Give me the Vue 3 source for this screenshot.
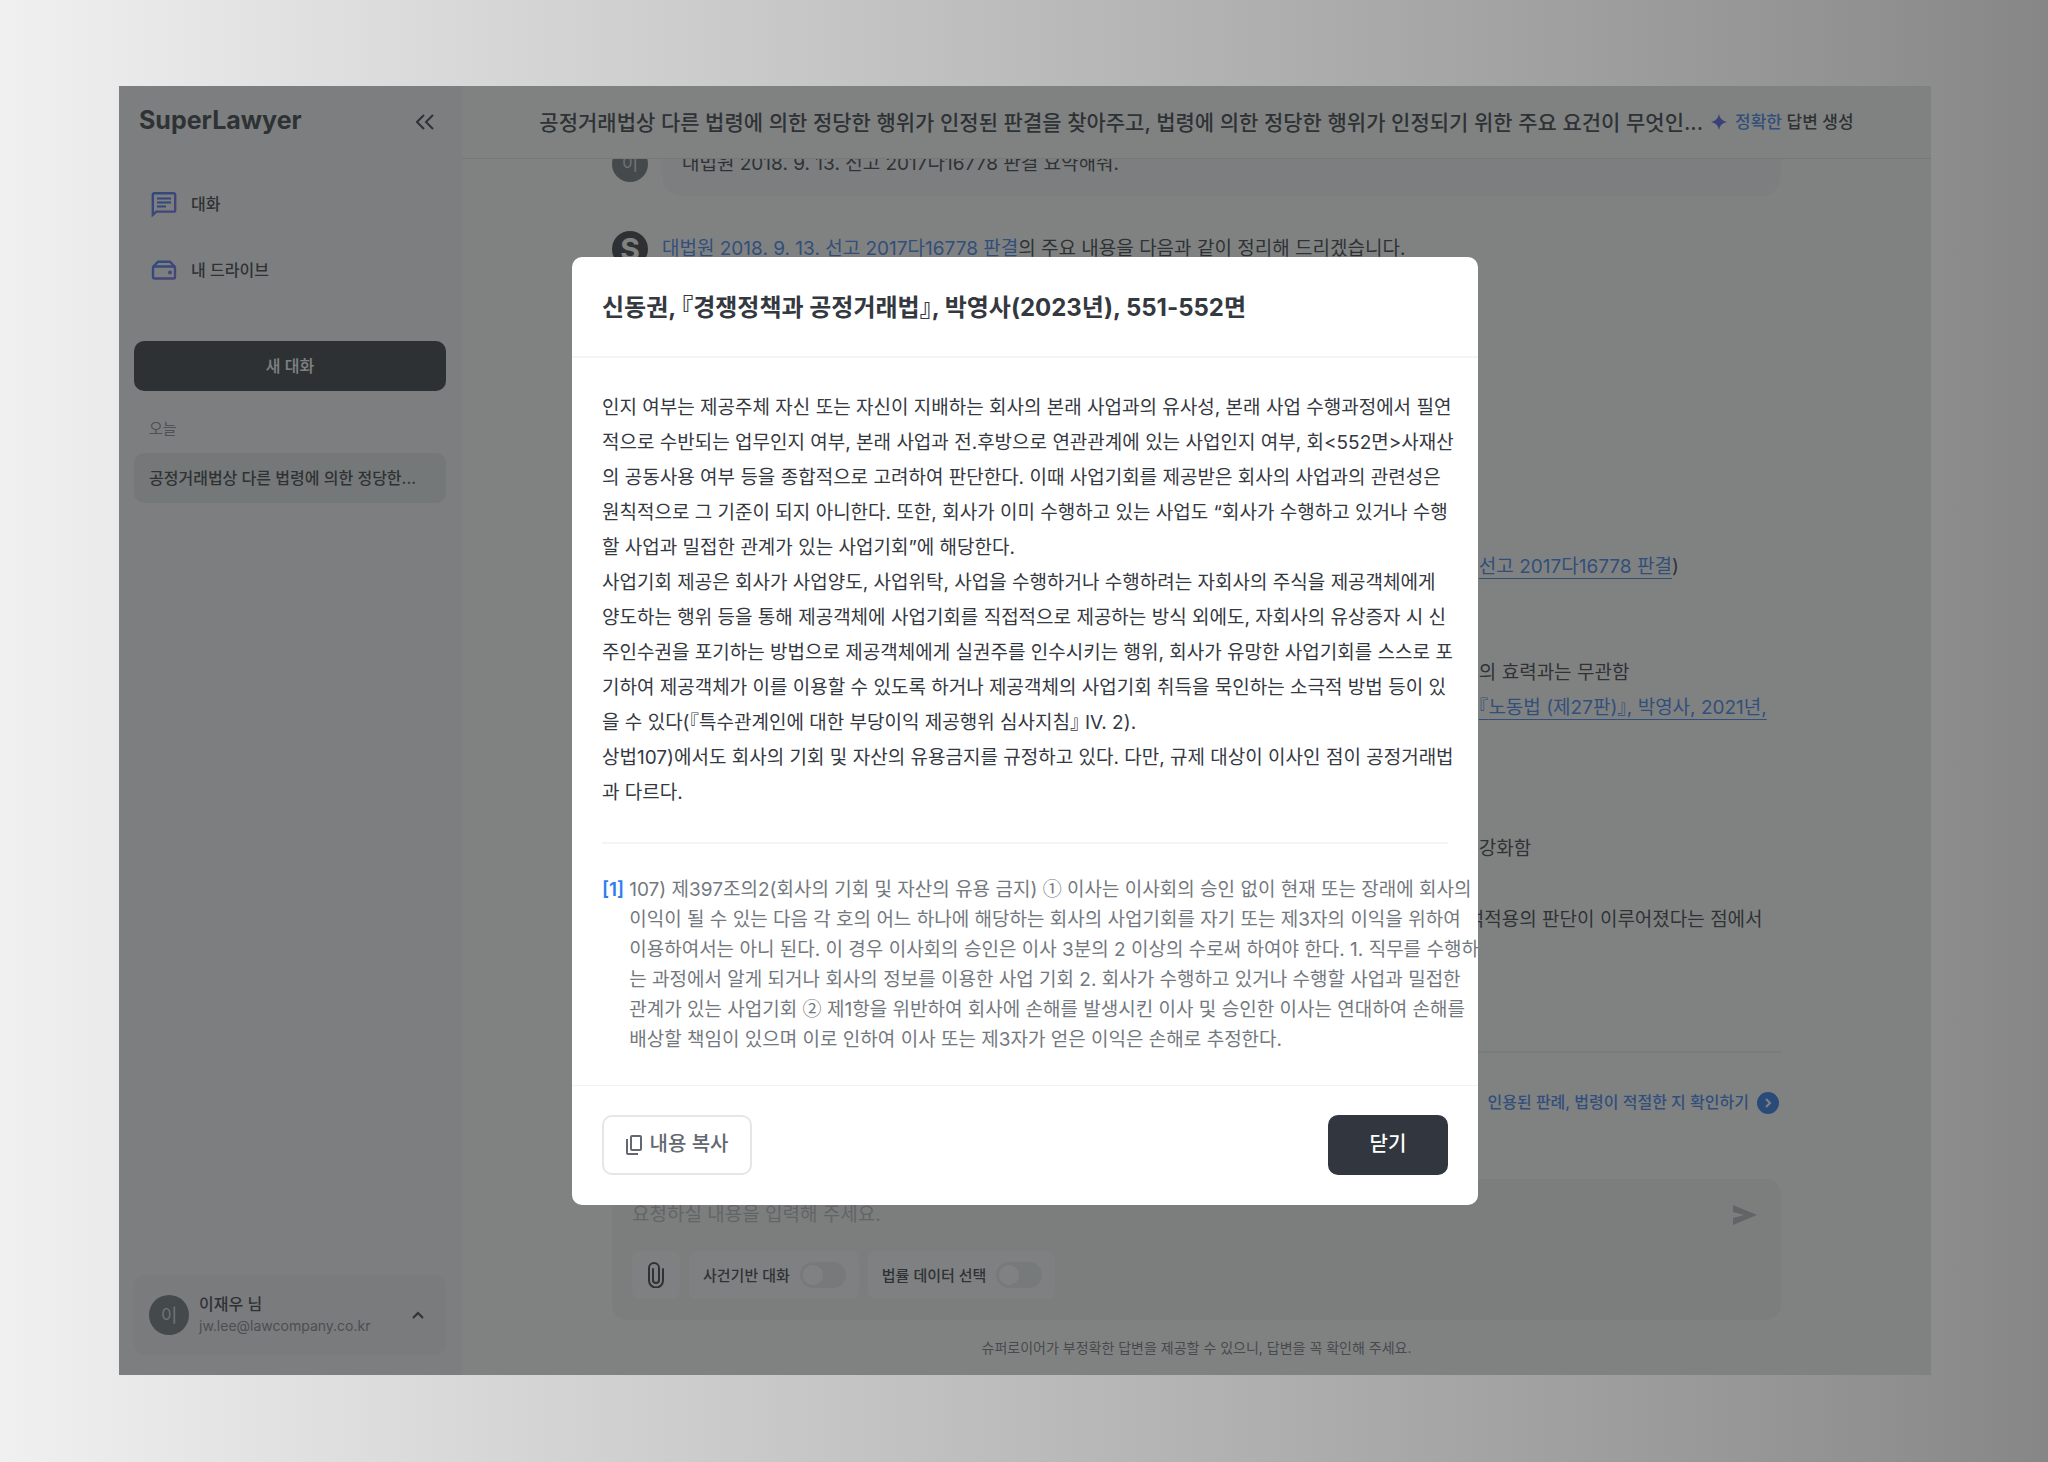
<template>
  <div class="page">
    <div class="window">
      <aside class="sidebar">
        <div class="brand-row">
          <h1 class="brand">SuperLawyer</h1>
          <button class="icon-button" type="button" aria-label="사이드바 접기">
            <svg width="18" height="16" viewBox="0 0 18 16" fill="none" stroke="currentColor" stroke-width="2">
              <path d="M8 1L1 8l7 7M17 1l-7 7 7 7" />
            </svg>
          </button>
        </div>

        <nav class="nav">
          <a class="nav-link" href="#chat">
            <svg width="26" height="26" viewBox="0 0 26 26" fill="none">
              <defs>
                <linearGradient id="navGradient" x1="0" y1="0" x2="1" y2="1">
                  <stop offset="0" stop-color="#3474f8" />
                  <stop offset="1" stop-color="#7a62e4" />
                </linearGradient>
              </defs>
              <path
                d="M3.2 2.2h19.6a1.4 1.4 0 0 1 1.4 1.4v15.6a1.4 1.4 0 0 1-1.4 1.4H5.4L1.8 23.8V3.6a1.4 1.4 0 0 1 1.4-1.4z"
                stroke="url(#navGradient)"
                stroke-width="2.4"
              />
              <path d="M6 7.5h14M6 11.500h14M6 15.5h9" stroke="#4069ee" stroke-width="2.2" />
            </svg>
            <span>대화</span>
          </a>
          <a class="nav-link" href="#drive">
            <svg width="26" height="26" viewBox="0 0 26 26" fill="none">
              <path
                d="M2 10l4.5-4.800a1.500 1.500 0 0 1 1-.4h11a1.500 1.500 0 0 1 1 .4L24 10"
                stroke="url(#navGradient)"
                stroke-width="2.4"
              />
              <rect x="2" y="9.500" width="22" height="12" rx="1.500" stroke="url(#navGradient)" stroke-width="2.4" />
              <circle cx="19" cy="15.500" r="2" fill="#6a6de4" />
            </svg>
            <span>내 드라이브</span>
          </a>
        </nav>

        <button class="new-chat" type="button">새 대화</button>
        <p class="group-label">오늘</p>
        <a class="history-item" href="#history">공정거래법상 다른 법령에 의한 정당한...</a>

        <button class="user-card" type="button">
          <span class="avatar avatar-large">이</span>
          <span class="user-text">
            <strong>이재우 님</strong>
            <small>jw.lee@lawcompany.co.kr</small>
          </span>
          <svg width="12" height="8" viewBox="0 0 12 8" fill="none" stroke="currentColor" stroke-width="2">
            <path d="M1 7l5-5 5 5" />
          </svg>
        </button>
      </aside>

      <main class="main">
        <header class="topbar">
          <h2>{{ chatTitle }}</h2>
          <svg width="16" height="16" viewBox="0 0 16 16" fill="#4f5de8">
            <path d="M8 0q1.200 6.800 8 8-6.800 1.200-8 8-1.200-6.800-8-8 6.800-1.200 8-8z" />
          </svg>
          <p class="mode"><em>정확한</em> 답변 생성</p>
        </header>

        <section class="thread">
          <article class="message question">
            <span class="avatar">이</span>
            <p class="bubble">대법원 2018. 9. 13. 선고 2017다16778 판결 요약해줘.</p>
          </article>

          <article class="message">
            <span class="avatar avatar-bot">S</span>
            <div class="answer">
              <p>
                <a class="plain-link" href="#case">대법원 2018. 9. 13. 선고 2017다16778 판결</a>의 주요 내용을 다음과 같이 정리해 드리겠습니다.
              </p>
              <div class="answer-tail">
                <p><a href="#case">선고 2017다16778 판결</a>)</p>
                <p class="gap-two">의 효력과는 무관함</p>
                <p><a href="#book"><span class="half">『</span>노동법 (제27판)<span class="half">』</span>, 박영사, 2021년,</a></p>
                <p class="gap-three">강화함</p>
                <p class="gap-one hanging">석적용의 판단이 이루어졌다는 점에서</p>
              </div>
            </div>
          </article>

          <a class="verify" href="#verify">
            <span>인용된 판례, 법령이 적절한 지 확인하기</span>
            <svg width="22" height="22" viewBox="0 0 22 22" fill="none">
              <circle cx="11" cy="11" r="11" fill="#2a74e6" />
              <path d="M9 7l4 4-4 4" stroke="#fff" stroke-width="2" />
            </svg>
          </a>
        </section>

        <form class="composer" @submit.prevent>
          <div class="composer-top">
            <input v-model="draft" type="text" aria-label="요청 내용" placeholder="요청하실 내용을 입력해 주세요." />
            <button class="icon-button send" type="submit" aria-label="보내기">
              <svg width="24" height="20" viewBox="0 0 24 20" fill="currentColor">
                <path d="M0 0l24 10L0 20v-7l11-3L0 7z" />
              </svg>
            </button>
          </div>
          <div class="composer-tools">
            <button class="attach" type="button" aria-label="파일 첨부">
              <svg width="16" height="26" viewBox="0 0 16 26" fill="none" stroke="currentColor" stroke-width="2" stroke-linecap="round">
                <path d="M15 7v11.500a7 7 0 0 1-14 0V6a5 5 0 0 1 10 0v12a3 3 0 0 1-6 0V7" />
              </svg>
            </button>
            <label v-for="option in options" :key="option.id" class="switch">
              <span>{{ option.label }}</span>
              <input v-model="option.on" type="checkbox" />
            </label>
          </div>
        </form>
        <p class="disclaimer">슈퍼로이어가 부정확한 답변을 제공할 수 있으니, 답변을 꼭 확인해 주세요.</p>
      </main>

      <div class="backdrop">
        <div class="modal" role="dialog" aria-modal="true" aria-labelledby="modal-title">
          <header class="modal-header">
            <h2 id="modal-title">
              신동권, <span class="half">『</span>경쟁정책과 공정거래법<span class="half">』</span>, 박영사(2023년), 551-552면
            </h2>
          </header>
          <div class="modal-body">
            <p class="excerpt">{{ excerptTop }}<span class="half">『</span>특수관계인에 대한 부당이익 제공행위 심사지침<span class="half">』</span>{{ excerptBottom }}</p>
            <hr />
            <div class="footnote">
              <a href="#note-1">[1]</a>
              <p>
                <template v-for="(part, index) in footnote" :key="index">
                  <span v-if="part.length === 1" class="circled">{{ part }}</span>
                  <template v-else>{{ part }}</template>
                </template>
              </p>
            </div>
          </div>
          <footer class="modal-footer">
            <button class="copy" type="button">
              <svg width="16" height="20" viewBox="0 0 16 20" fill="none" stroke="currentColor" stroke-width="2">
                <rect x="5" y="1" width="10" height="14" rx="1" />
                <path d="M1 4v14a1 1 0 0 0 1 1h10" />
              </svg>
              내용 복사
            </button>
            <button class="close" type="button">닫기</button>
          </footer>
        </div>
      </div>
    </div>
  </div>
</template>

<script setup>
import { ref } from "vue";

const chatTitle =
  "공정거래법상 다른 법령에 의한 정당한 행위가 인정된 판결을 찾아주고, 법령에 의한 정당한 행위가 인정되기 위한 주요 요건이 무엇인...";

const draft = ref("");

const options = ref([
  { id: "case", label: "사건기반 대화", on: false },
  { id: "data", label: "법률 데이터 선택", on: false },
]);

const excerptTop = `인지 여부는 제공주체 자신 또는 자신이 지배하는 회사의 본래 사업과의 유사성, 본래 사업 수행과정에서 필연
적으로 수반되는 업무인지 여부, 본래 사업과 전.후방으로 연관관계에 있는 사업인지 여부, 회<552면>사재산
의 공동사용 여부 등을 종합적으로 고려하여 판단한다. 이때 사업기회를 제공받은 회사의 사업과의 관련성은
원칙적으로 그 기준이 되지 아니한다. 또한, 회사가 이미 수행하고 있는 사업도 “회사가 수행하고 있거나 수행
할 사업과 밀접한 관계가 있는 사업기회”에 해당한다.
사업기회 제공은 회사가 사업양도, 사업위탁, 사업을 수행하거나 수행하려는 자회사의 주식을 제공객체에게
양도하는 행위 등을 통해 제공객체에 사업기회를 직접적으로 제공하는 방식 외에도, 자회사의 유상증자 시 신
주인수권을 포기하는 방법으로 제공객체에게 실권주를 인수시키는 행위, 회사가 유망한 사업기회를 스스로 포
기하여 제공객체가 이를 이용할 수 있도록 하거나 제공객체의 사업기회 취득을 묵인하는 소극적 방법 등이 있
을 수 있다(`;

const excerptBottom = ` IV. 2).
상법107)에서도 회사의 기회 및 자산의 유용금지를 규정하고 있다. 다만, 규제 대상이 이사인 점이 공정거래법
과 다르다.`;

// the circled numerals are split out so that they can be set in the Korean face
const footnote = `107) 제397조의2(회사의 기회 및 자산의 유용 금지) ① 이사는 이사회의 승인 없이 현재 또는 장래에 회사의
이익이 될 수 있는 다음 각 호의 어느 하나에 해당하는 회사의 사업기회를 자기 또는 제3자의 이익을 위하여
이용하여서는 아니 된다. 이 경우 이사회의 승인은 이사 3분의 2 이상의 수로써 하여야 한다. 1. 직무를 수행하
는 과정에서 알게 되거나 회사의 정보를 이용한 사업 기회 2. 회사가 수행하고 있거나 수행할 사업과 밀접한
관계가 있는 사업기회 ② 제1항을 위반하여 회사에 손해를 발생시킨 이사 및 승인한 이사는 연대하여 손해를
배상할 책임이 있으며 이로 인하여 이사 또는 제3자가 얻은 이익은 손해로 추정한다.`.split(/([①②])/);
</script>

<style>
body {
  margin: 0;
}
</style>

<style scoped>
.page {
  display: flex;
  box-sizing: border-box;
  min-height: 100vh;
  padding: 86px 117px 87px 119px;
  background: linear-gradient(90deg, #f0f0f0 0%, #e2e2e2 13%, #d0d0d0 30%, #b8b8b8 53%, #a0a0a0 76%, #909090 92%, #868686 100%);
  color: #34383f;
  font-family: Inter, "Noto Sans CJK KR", sans-serif;
  font-size: 19px;
  line-height: 35px;
}

.page * {
  box-sizing: border-box;
}

h1,
h2,
p {
  margin: 0;
}

button,
input {
  font: inherit;
  color: inherit;
}

button {
  padding: 0;
  border: 0;
  cursor: pointer;
}

a {
  color: #3c7eea;
  text-underline-offset: 5px;
}

.half {
  font-feature-settings: "halt";
}

.circled {
  font-family: "Noto Sans CJK KR", sans-serif;
  line-height: 20px;
}

.window {
  position: relative;
  display: flex;
  flex: 1;
  min-width: 0;
  background: #fff;
  overflow: hidden;
}

.icon-button {
  display: flex;
  background: none;
}

.avatar {
  display: flex;
  flex: none;
  align-items: center;
  justify-content: center;
  width: 36px;
  height: 36px;
  border-radius: 50%;
  background: #6a7277;
  color: #d5d8da;
  font-size: 18px;
}

.avatar-bot {
  background: #32363e;
  color: #fff;
  font-size: 30px;
  font-weight: 700;
}

.avatar-large {
  width: 40px;
  height: 40px;
}

/* sidebar */
.sidebar {
  display: flex;
  flex: none;
  flex-direction: column;
  width: 343px;
  padding: 16px 16px 20px 15px;
  background: #f6f6f7;
  font-size: 16px;
}

.brand-row {
  display: flex;
  align-items: center;
  justify-content: space-between;
  height: 40px;
  padding: 0 12px 0 5px;
}

.brand {
  padding-bottom: 4px;
  font-size: 25px;
  font-weight: 700;
}

.nav {
  display: flex;
  flex-direction: column;
  gap: 16px;
  margin-top: 37px;
}

.nav-link {
  display: flex;
  align-items: center;
  gap: 14px;
  height: 50px;
  padding: 0 17px;
  color: inherit;
  font-weight: 500;
  text-decoration: none;
}

.new-chat {
  height: 50px;
  margin-top: 46px;
  border-radius: 10px;
  background: #32363e;
  color: #fff;
  font-weight: 500;
}

.group-label {
  margin: 20px 15px 7px;
  color: #82878e;
  font-size: 15px;
}

.history-item {
  height: 50px;
  padding: 0 15px;
  border-radius: 10px;
  background: #e4e5e6;
  color: inherit;
  font-weight: 500;
  line-height: 50px;
  text-decoration: none;
  white-space: nowrap;
  overflow: hidden;
}

.user-card {
  display: flex;
  align-items: center;
  gap: 10px;
  height: 80px;
  margin-top: auto;
  padding: 0 22px 0 15px;
  border-radius: 10px;
  background: #edeef1;
  text-align: left;
}

.user-text {
  display: flex;
  flex: 1;
  flex-direction: column;
  line-height: 21px;
}

.user-text strong {
  font-weight: 500;
}

.user-text small {
  color: #7a7f86;
  font-size: 14px;
}

/* main column */
.main {
  display: flex;
  flex: 1;
  flex-direction: column;
  min-width: 0;
}

.topbar {
  display: flex;
  flex: none;
  align-items: center;
  justify-content: center;
  gap: 8px;
  height: 73px;
  border-bottom: 1px solid #e3e5e8;
  white-space: nowrap;
}

.topbar h2 {
  font-size: 21px;
  font-weight: 500;
}

.mode {
  font-size: 17px;
  font-weight: 500;
}

.mode em {
  color: #3c7eea;
  font-style: normal;
}

.thread {
  flex: 1;
  min-height: 0;
  padding: 0 150px;
  overflow: hidden;
}

.message {
  display: flex;
  gap: 14px;
}

.question {
  align-items: center;
  margin: -28px 0 35px;
}

.bubble {
  flex: 1;
  padding: 15px 20px;
  border-radius: 20px;
  background: #f6f6f7;
}

.answer {
  flex: 1;
  min-width: 0;
  padding-bottom: 114px;
  border-bottom: 2px solid #eeeff0;
}

.plain-link {
  text-decoration: none;
}

.answer-tail {
  margin: 283px 0 0 73%;
  white-space: nowrap;
}

.gap-one {
  margin-top: 36px;
}

.gap-two {
  margin-top: 71px;
}

.gap-three {
  margin-top: 106px;
}

.hanging {
  text-indent: -12px;
}

.verify {
  display: flex;
  align-items: center;
  justify-content: flex-end;
  gap: 8px;
  margin-top: 32px;
  padding-right: 2px;
  font-size: 16px;
  font-weight: 500;
  text-decoration: none;
}

.composer {
  display: flex;
  flex-direction: column;
  justify-content: space-between;
  height: 141px;
  margin: 0 150px;
  padding: 18px 20px 21px;
  border-radius: 15px;
  background: #f4f4f5;
}

.composer-top {
  display: flex;
  align-items: center;
  padding-right: 4px;
}

.composer-top input {
  flex: 1;
  height: 35px;
  padding: 0;
  border: 0;
  background: none;
}

.composer-top input::placeholder {
  color: #b4b7bb;
}

.send {
  color: #b4b7bb;
}

.composer-tools {
  display: flex;
  gap: 9px;
}

.attach,
.switch {
  display: flex;
  align-items: center;
  justify-content: center;
  height: 48px;
  border-radius: 8px;
  background: #fbfbfc;
}

.attach {
  width: 48px;
}

.switch {
  gap: 10px;
  padding: 0 13px 0 14px;
  font-size: 15px;
  font-weight: 500;
}

.switch input {
  appearance: none;
  display: flex;
  align-items: center;
  width: 46px;
  height: 26px;
  margin: 0;
  padding: 0 3px;
  border-radius: 13px;
  background: #e8eaed;
}

.switch input::before {
  content: "";
  width: 20px;
  height: 20px;
  border-radius: 50%;
  background: #fff;
}

.switch input:checked {
  justify-content: flex-end;
  background: #3c7eea;
}

.disclaimer {
  height: 55px;
  color: #6f747b;
  font-size: 14px;
  line-height: 55px;
  text-align: center;
}

/* modal */
.backdrop {
  position: absolute;
  inset: 0;
  display: flex;
  align-items: center;
  justify-content: center;
  background: rgba(44, 46, 47, 0.6);
}

.modal {
  width: 50%;
  border-radius: 10px;
  background: #fff;
  overflow: hidden;
}

.modal-header {
  padding: 33px 30px 31px;
  border-bottom: 2px solid #f3f4f5;
}

.modal-header h2 {
  font-size: 24px;
  font-weight: 700;
}

.modal-body {
  padding: 32px 30px 30px;
  white-space: pre;
}

.modal-body hr {
  margin: 32px 0 31px;
  border: 0;
  border-top: 2px solid #f3f4f5;
}

.footnote {
  display: flex;
  gap: 5px;
  color: #73787e;
  line-height: 30px;
}

.footnote p {
  white-space: pre-line;
  flex: none;
}

.footnote a {
  color: #2f7df0;
  font-weight: 600;
  text-decoration: none;
}

.modal-footer {
  display: flex;
  justify-content: space-between;
  padding: 29px 30px 30px;
  border-top: 1px solid #f1f2f3;
}

.copy,
.close {
  display: flex;
  align-items: center;
  justify-content: center;
  gap: 8px;
  height: 60px;
  border-radius: 10px;
  font-size: 20px;
  font-weight: 500;
}

.copy {
  width: 150px;
  border: 2px solid #e4e6e8;
  background: #fff;
  color: #63686f;
}

.close {
  width: 120px;
  background: #32373f;
  color: #fff;
}
</style>
